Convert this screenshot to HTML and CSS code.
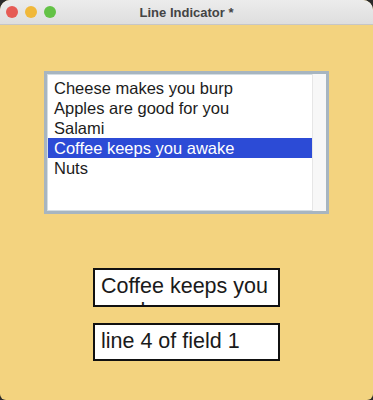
FILE: index.html
```html
<!DOCTYPE html>
<html>
<head>
<meta charset="utf-8">
<link rel="stylesheet" href="styles.css">
</head>
<body>
<div class="window">
  <div class="titlebar">
    <div class="lights">
      <span class="light red"></span>
      <span class="light yellow"></span>
      <span class="light green"></span>
    </div>
    <div class="title">Line Indicator *</div>
  </div>
  <div class="content">
    <div class="listbox">
      <div class="items">
        <div class="item">Cheese makes you burp</div>
        <div class="item">Apples are good for you</div>
        <div class="item">Salami</div>
        <div class="item selected">Coffee keeps you awake</div>
        <div class="item">Nuts</div>
      </div>
      <div class="scrolltrack"></div>
    </div>
    <div class="field field-1"><div class="field-text">Coffee keeps you awake</div></div>
    <div class="field field-2"><div class="field-text">line 4 of field 1</div></div>
  </div>
</div>
</body>
</html>
```

FILE: styles.css
```css
html, body {
  margin: 0;
  padding: 0;
  background: #2a2a2a;
}
body {
  width: 373px;
  height: 400px;
  overflow: hidden;
  font-family: "Liberation Sans", Arial, sans-serif;
}
.window {
  width: 373px;
  height: 400px;
  background: #f3d37f;
  border-radius: 10px 10px 6px 6px;
  overflow: hidden;
  display: flex;
  flex-direction: column;
}
.titlebar {
  height: 24px;
  flex: none;
  background: linear-gradient(#ececec, #dedede);
  border-bottom: 1px solid #c6c6c6;
  position: relative;
  display: flex;
  align-items: center;
  justify-content: center;
}
.lights {
  position: absolute;
  left: 6px;
  top: 6px;
  display: flex;
  gap: 7px;
}
.light {
  width: 12px;
  height: 12px;
  border-radius: 50%;
  display: block;
}
.red { background: #e65b55; }
.yellow { background: #f0b83a; }
.green { background: #63c246; }
.title {
  font-size: 13px;
  font-weight: bold;
  color: #444444;
}
.content {
  flex: 1;
  display: flex;
  flex-direction: column;
}
.listbox {
  margin: 46px 0 0 44px;
  width: 285px;
  height: 143px;
  box-sizing: border-box;
  border: 3px solid #a7b5c0;
  box-shadow: inset 0 0 0 1px #d4dde3;
  background: #ffffff;
  display: flex;
}
.items {
  flex: 1;
  padding: 4px 0 0 1px;
}
.item {
  height: 20px;
  line-height: 20px;
  font-size: 16.5px;
  color: #1c1c1c;
  padding-left: 6px;
  white-space: nowrap;
}
.item.selected {
  background: #2c4bd6;
  color: #ffffff;
}
.scrolltrack {
  width: 13px;
  background: #f7f7f7;
  border-left: 1px solid #e6e6e6;
}
.field {
  width: 187px;
  box-sizing: border-box;
  border: 2px solid #111111;
  background: #ffffff;
  margin-left: 93px;
  overflow: hidden;
}
.field-1 {
  margin-top: 54px;
  height: 39px;
}
.field-2 {
  margin-top: 16px;
  height: 38px;
}
.field-text {
  font-size: 21.5px;
  line-height: 25px;
  color: #1a1a1a;
  padding: 4px 4px 0 6px;
}
```
